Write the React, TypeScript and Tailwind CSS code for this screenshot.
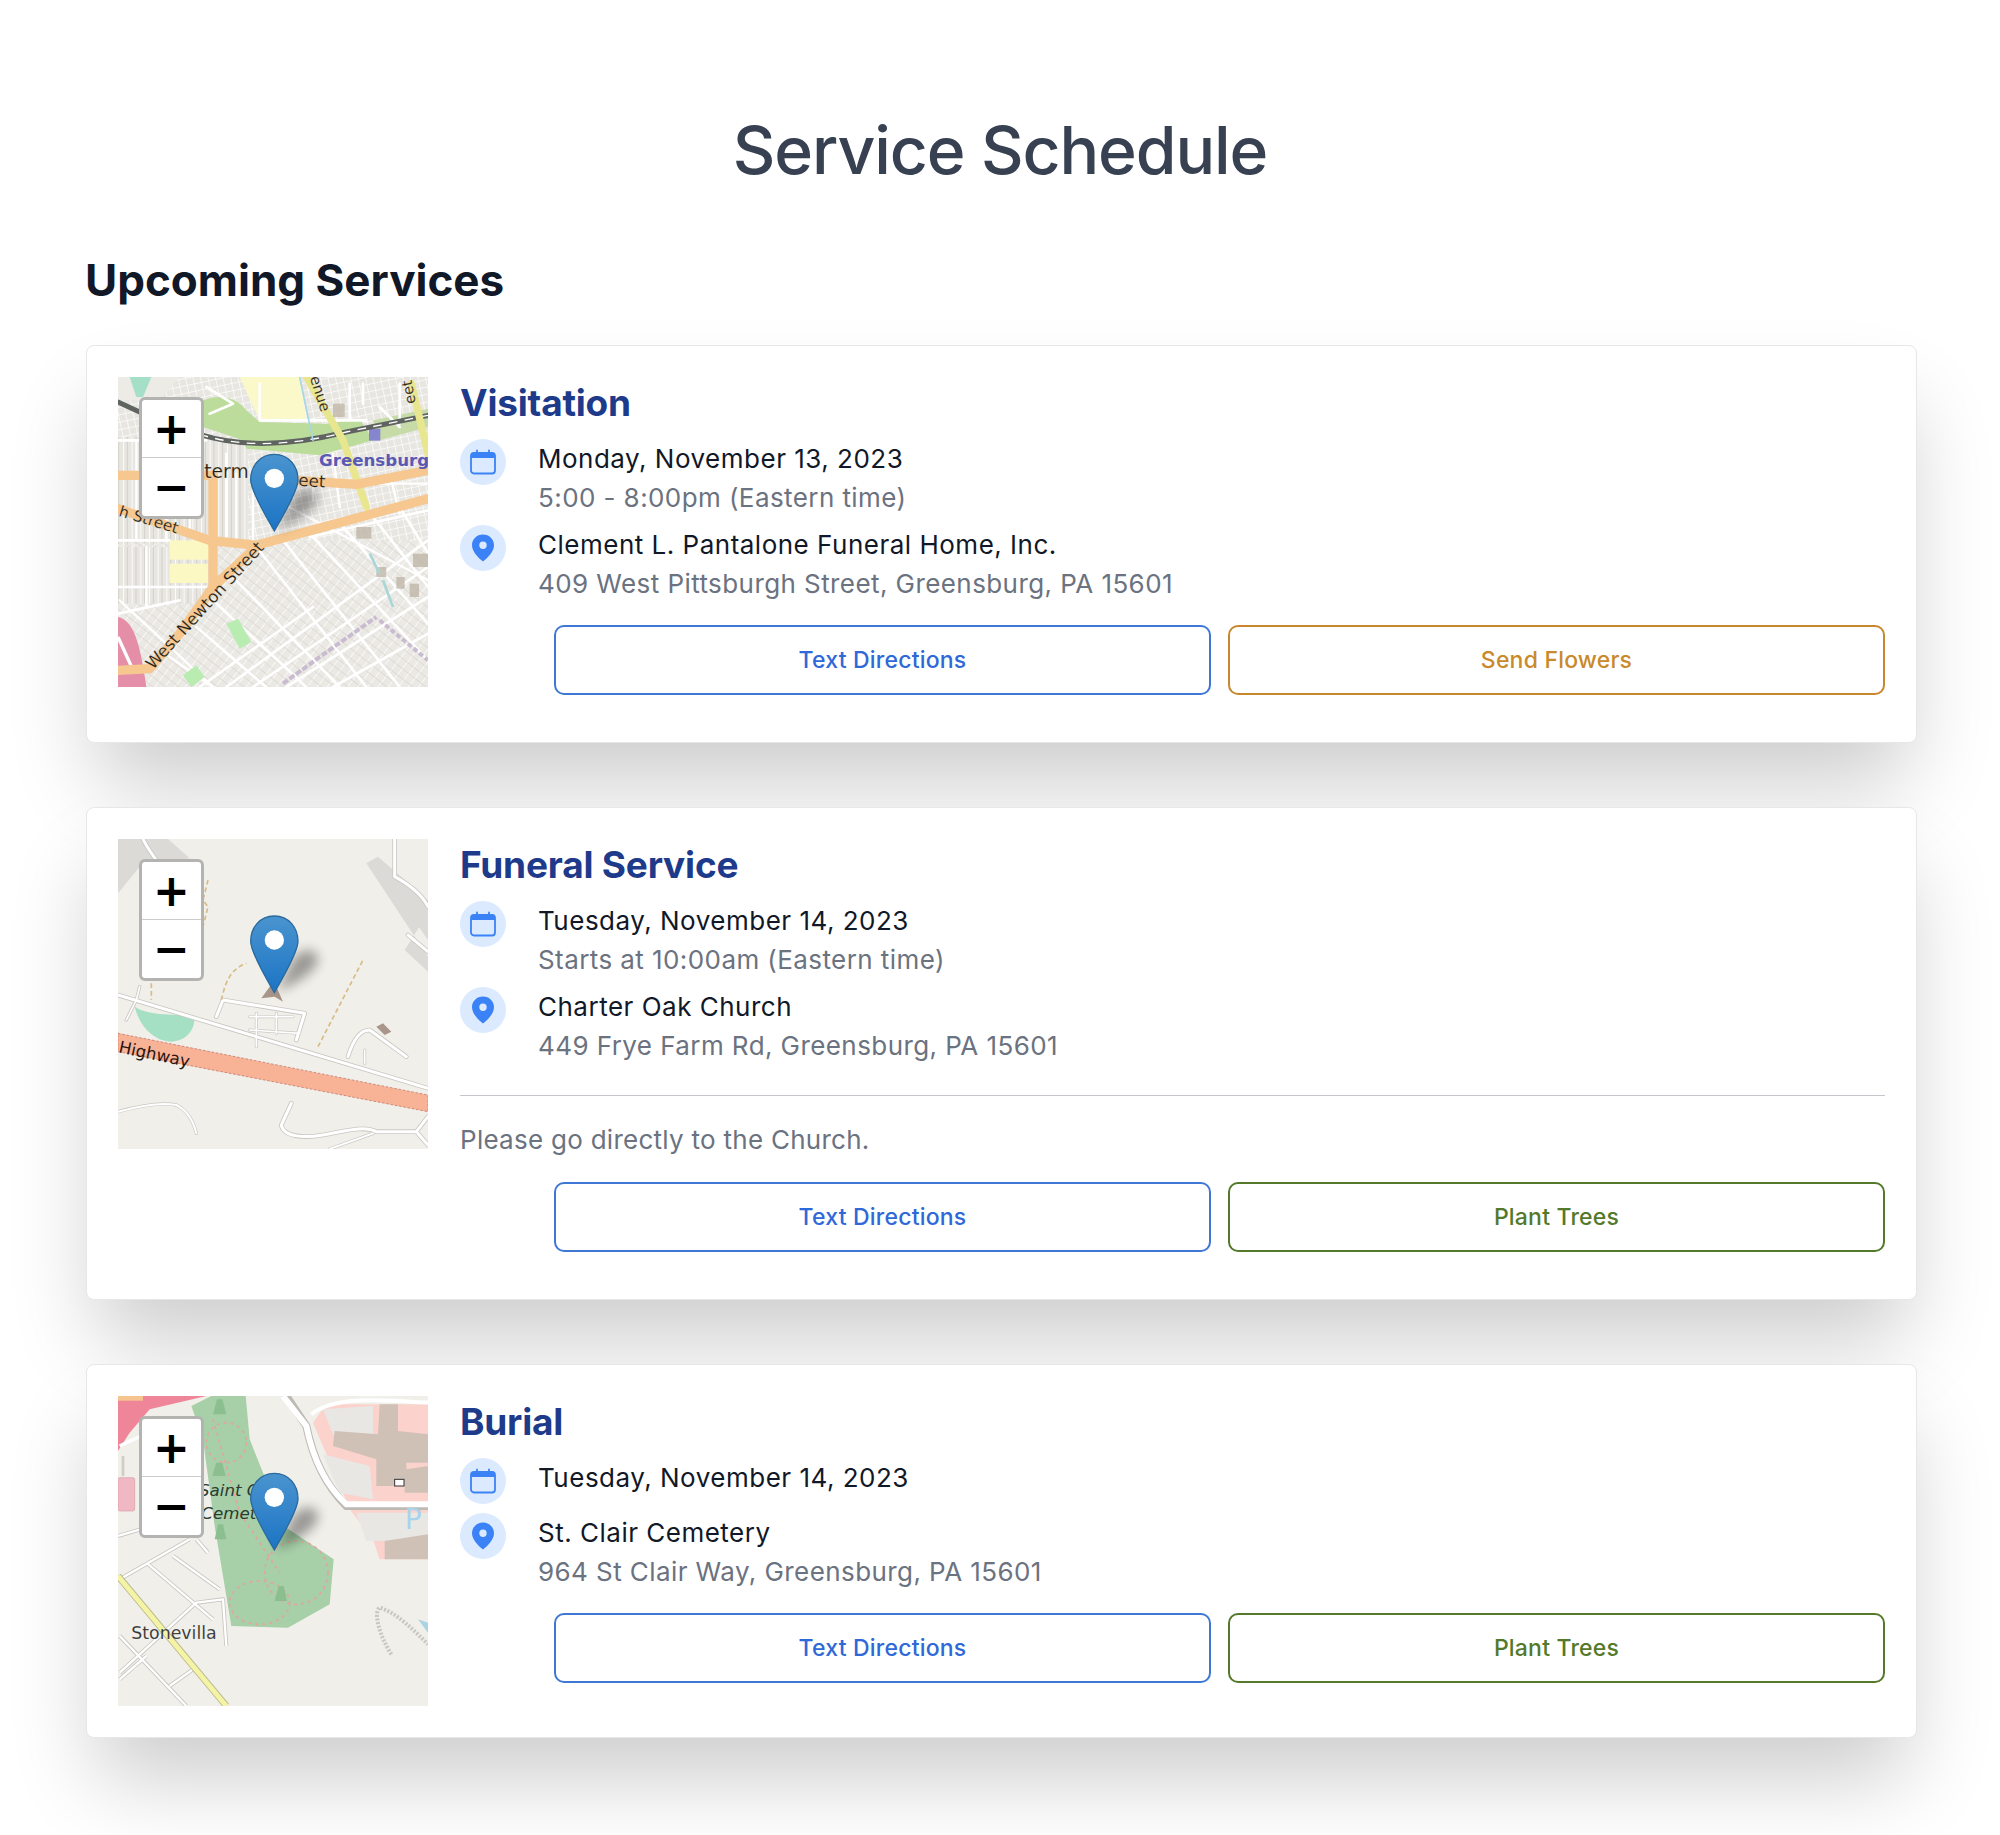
import React from "react";

type L = [string, string, number];

function Pin({ id, dy = 0 }: { id: string; dy?: number }) {
  return (
    <g transform={`translate(0 ${dy})`}>
      <defs>
        <linearGradient id={`${id}g`} x1="0" y1="0" x2="0" y2="1">
          <stop offset="0" stopColor="#4a94cf" />
          <stop offset="1" stopColor="#1c74c4" />
        </linearGradient>
        <filter id={`${id}b`} x="-80%" y="-80%" width="260%" height="260%">
          <feGaussianBlur stdDeviation="18" />
        </filter>
      </defs>
      <path d="M590 570 L640 470 C665 440 700 435 715 465 C720 500 660 540 590 570Z" fill="#000" opacity="0.36" filter={`url(#${id}b)`} />
      <path d="M584 342C540 342 513 378 513 418C513 452 560 530 584 572C608 530 655 452 655 418C655 378 628 342 584 342Z" fill={`url(#${id}g)`} stroke="#2a6a9e" strokeWidth="4" />
      <circle cx="584" cy="414" r="29" fill="#fff" />
    </g>
  );
}

function Lines({ items }: { items: L[] }) {
  return (
    <>
      {items.map(([d, c, w], i) => (
        <path key={i} d={d} stroke={c} strokeWidth={w} fill="none" strokeLinejoin="round" strokeLinecap="round" />
      ))}
    </>
  );
}

function Map1() {
  const white: L[] = [
    ["M115 300H380M115 600H270M115 740H400M115 820L300 780", "#fff", 8],
    ["M170 300V600M260 300V600M330 300V590M200 620V800M120 780L400 1040", "#fff", 7],
    ["M470 400V610M520 400V610M590 480L1045 720M700 430V480M440 340V610", "#fff", 7],
    ["M520 1040L1045 680M440 1040L1045 600M620 1040L1045 770M760 1040L1045 880M690 590L1045 510M360 1040L700 800", "#fff", 8],
    ["M530 620L860 1040M610 600L960 1040M700 590L1045 960M790 560L1045 850M880 530L1045 740M960 500L1045 640", "#fff", 8],
    ["M400 780L680 1040M350 860L560 1040M270 950L400 1040M450 700L780 1040", "#fff", 8],
    ["M540 240H860M540 240V130M900 200L960 260M810 130V240M380 140L460 190L390 220M960 130V250M850 130V190", "#fff", 8],
    ["M700 430H1045M760 340L780 500M930 400L960 520", "#fff", 7],
  ];
  return (
    <svg viewBox="115 110 930 930" className="block h-full w-full">
      <defs>
        <pattern id="m1a" width="24" height="24" patternUnits="userSpaceOnUse" patternTransform="rotate(38)">
          <rect width="24" height="24" fill="#ebe9e4" />
          <path d="M0 0V24" stroke="#fff" strokeWidth="4" />
          <path d="M0 12H24" stroke="#d9d6d0" strokeWidth="2" />
        </pattern>
        <pattern id="m1b" width="26" height="60" patternUnits="userSpaceOnUse">
          <rect width="26" height="60" fill="#e8e6e1" />
          <path d="M0 0V60" stroke="#fff" strokeWidth="5" />
          <path d="M13 0V60" stroke="#d3d0ca" strokeWidth="3" />
        </pattern>
        <pattern id="m1c" width="22" height="22" patternUnits="userSpaceOnUse" patternTransform="rotate(-12)">
          <rect width="22" height="22" fill="#e8e6e1" />
          <path d="M0 0H22M0 0V22" stroke="#fff" strokeWidth="4" />
        </pattern>
      </defs>
      <rect x="115" y="110" width="930" height="930" fill="url(#m1c)" />
      <rect x="115" y="600" width="930" height="440" fill="url(#m1a)" />
      <rect x="115" y="290" width="390" height="320" fill="url(#m1b)" />
      <rect x="115" y="620" width="290" height="170" fill="url(#m1b)" />
      <path d="M115 110H300L240 180H115Z" fill="#ecebe6" />
      <path d="M150 110H215L190 170H170Z" fill="#a5dfc8" />
      <path d="M480 110H660L680 240H540Z" fill="#fbf9c9" />
      <path d="M370 180C420 160 470 170 500 210L540 245L740 250L840 235L880 300L720 345L500 325L490 300L370 260Z" fill="#bcdc9c" />
      <path d="M880 240L1045 205V260L900 300Z" fill="#c6dba8" />
      <Lines items={white} />
      <rect x="868" y="265" width="34" height="36" fill="#8686cf" />
      <rect x="270" y="600" width="120" height="58" fill="#fbf8c3" />
      <rect x="270" y="670" width="115" height="58" fill="#fbf8c3" />
      <path d="M440 850L475 835L515 905L480 925Z" fill="#b8ecb0" />
      <path d="M310 1005L350 975L375 1010L335 1040Z" fill="#b8ecb0" />
      <path d="M115 830C160 840 180 900 200 1040H115Z" fill="#e58ea8" />
      <path d="M115 890L165 1000" stroke="#fff" strokeWidth="10" fill="none" />
      <Lines items={[
        ["M115 185L180 215L360 282C480 320 620 320 800 275L1045 225", "#5f6460", 15],
      ]} />
      <path d="M360 282C480 320 620 320 800 275L1045 225" stroke="#fff" strokeWidth="4" fill="none" strokeDasharray="26 22" />
      <Lines items={[
        ["M680 110L790 300L860 500", "#e9e690", 22],
        ["M995 130L1045 340", "#e9e690", 22],
        ["M115 405H400M650 420L830 432L1045 390", "#f6c78f", 28],
        ["M115 505L390 600L530 615L1045 475", "#f6c78f", 28],
        ["M400 405V740", "#f6c78f", 28],
        ["M115 990L210 985L300 880L400 740L530 620", "#f6c78f", 28],
        ["M660 110L700 300", "#a8d6e4", 5],
      ]} />
      <path d="M610 1030L720 950L890 830" stroke="#c9bcd0" strokeWidth="12" fill="none" strokeDasharray="18 6" />
      <path d="M900 840L1045 960" stroke="#c9bcd0" strokeWidth="12" fill="none" strokeDasharray="14 8" />
      <g fill="#bfb6a8" opacity="0.8">
        <rect x="830" y="560" width="45" height="35" />
        <rect x="1000" y="640" width="45" height="40" />
        <rect x="760" y="190" width="35" height="40" />
        <rect x="890" y="680" width="30" height="30" />
        <rect x="950" y="710" width="25" height="35" />
        <rect x="990" y="730" width="28" height="40" />
      </g>
      <path d="M870 640L900 700M910 720L940 800" stroke="#a9d6d8" strokeWidth="8" />
      <g fontFamily="'DejaVu Sans', sans-serif" fill="#1f1a12" fontSize="50" stroke="#f6e6cc" strokeOpacity="0.5" strokeWidth="1">
        <text x="352" y="412" fontSize="56">tterm</text>
        <text x="655" y="436" transform="rotate(4 655 436)">eet</text>
        <text x="115" y="526" transform="rotate(17 115 526)" fontSize="46">h Street</text>
        <text x="220" y="990" transform="rotate(-47.5 220 990)" fontSize="50">West Newton Street</text>
        <text x="690" y="112" transform="rotate(72 690 112)" fontSize="44">enue</text>
        <text x="1008" y="188" transform="rotate(-100 1008 188)" fontSize="44">eet</text>
      </g>
      <text x="718" y="378" fontFamily="'DejaVu Sans', sans-serif" fontWeight="700" fontSize="50" fill="#5a5ab5">Greensburg</text>
      <Pin id="p1" />
    </svg>
  );
}

function Map2() {
  return (
    <svg viewBox="115 117 930 930" className="block h-full w-full">
      <rect x="115" y="117" width="930" height="930" fill="#f1efe9" />
      <path d="M115 117H265L330 175L240 190L180 200L115 280Z" fill="#dcdad6" />
      <path d="M860 190L895 170L1045 300V420L1010 370L1045 340L975 450L1045 515V470Z" fill="#dcdad6" />
      <path d="M165 620C210 650 290 640 345 650C345 700 310 725 270 725C220 720 180 680 165 620Z" fill="#a5dfc4" />
      <g fill="none" stroke="#c9c7c3" strokeLinejoin="round" strokeLinecap="round">
        <path d="M115 585L1045 865" strokeWidth="14" />
        <path d="M190 117C205 150 225 170 235 190" strokeWidth="14" />
        <path d="M945 117V230C1000 260 1030 290 1045 320" strokeWidth="14" />
        <path d="M985 405L1045 455" strokeWidth="14" />
        <path d="M410 650L430 600L675 640L650 720" strokeWidth="14" />
        <path d="M510 650H640M590 640V700M530 640L530 740M510 690L660 700" strokeWidth="9" />
        <path d="M805 770C820 720 840 690 870 690L980 770" strokeWidth="14" />
        <path d="M855 750V790" strokeWidth="9" />
        <path d="M115 935C170 920 240 905 290 915C320 930 340 960 350 1000" strokeWidth="10" />
        <path d="M635 910L605 975C610 1010 670 1015 730 1005C790 995 850 975 890 995H1010L1045 950M1010 995L1045 1035" strokeWidth="14" />
        <path d="M750 1047L880 1000" strokeWidth="10" />
        <path d="M180 560L170 600L140 660" strokeWidth="10" />
      </g>
      <g fill="none" stroke="#fff" strokeLinejoin="round" strokeLinecap="round">
        <path d="M115 585L1045 865" strokeWidth="9" />
        <path d="M190 117C205 150 225 170 235 190" strokeWidth="9" />
        <path d="M945 117V230C1000 260 1030 290 1045 320" strokeWidth="9" />
        <path d="M985 405L1045 455" strokeWidth="9" />
        <path d="M410 650L430 600L675 640L650 720" strokeWidth="9" />
        <path d="M510 650H640M590 640V700M530 640L530 740M510 690L660 700" strokeWidth="5" />
        <path d="M805 770C820 720 840 690 870 690L980 770" strokeWidth="9" />
        <path d="M855 750V790" strokeWidth="5" />
        <path d="M115 935C170 920 240 905 290 915C320 930 340 960 350 1000" strokeWidth="6" />
        <path d="M635 910L605 975C610 1010 670 1015 730 1005C790 995 850 975 890 995H1010L1045 950M1010 995L1045 1035" strokeWidth="9" />
        <path d="M750 1047L880 1000" strokeWidth="6" />
        <path d="M180 560L170 600L140 660" strokeWidth="5" />
      </g>
      <g fill="none" stroke="#d7bc85" strokeWidth="5" strokeDasharray="14 9">
        <path d="M385 240L370 300L385 320L370 380" />
        <path d="M425 600C435 560 445 510 500 490" />
        <path d="M215 550V600" />
        <path d="M715 740L850 480" />
      </g>
      <path d="M115 700L1045 885V935L115 755Z" fill="#f8b397" stroke="#b96a5a" strokeWidth="2" strokeDasharray="8 5" />
      <path d="M545 595L570 560L590 560L610 605L585 590Z" fill="#a8968a" />
      <path d="M890 680L910 670L935 695L915 705Z" fill="#a8968a" />
      <text x="115" y="757" transform="rotate(12 115 757)" fontFamily="'DejaVu Sans', sans-serif" fontSize="50" fill="#2a1610">Highway</text>
      <Pin id="p2" dy={6} />
    </svg>
  );
}

function Map3() {
  return (
    <svg viewBox="115 110 930 930" className="block h-full w-full">
      <rect x="115" y="110" width="930" height="930" fill="#f0efe9" />
      <path d="M115 110H380L210 150L150 220L115 275Z" fill="#ee8598" />
      <rect x="115" y="110" width="75" height="14" fill="#f6c58f" />
      <path d="M335 140L395 110H498L510 240L550 340L620 505L762 600L750 735L625 805L455 800L405 500L370 240Z" fill="#a7cfa8" />
      <g fill="none" stroke="#e5a3a0" strokeWidth="5" strokeDasharray="9 12">
        <circle cx="440" cy="250" r="60" />
        <ellipse cx="540" cy="730" rx="90" ry="65" />
        <circle cx="650" cy="640" r="95" />
        <path d="M400 180L480 460L600 640" />
      </g>
      <g fill="#8cbf8f">
        <path d="M400 165L412 120H428L440 165Z" />
        <path d="M398 350L410 310H428L438 350Z" />
        <path d="M405 540L415 495H430L440 540Z" />
        <path d="M585 725L597 680H612L622 725Z" />
      </g>
      <path d="M700 190L740 135H1045V600H900L880 540L810 450Z" fill="#fcd2cd" />
      <path d="M730 285L870 320L880 420L780 400Z" fill="#e8e7e4" />
      <path d="M830 460L1045 460V530L910 545H860Z" fill="#e8e7e4" />
      <path d="M730 150L880 140V230L760 225Z" fill="#e8e7e4" />
      <path d="M900 135H955V215L1045 225V310H980V330L1045 320V400H975V380H890V300L760 260L765 215L895 225Z" fill="#cfc1b6" />
      <path d="M915 545L1045 525V600H915Z" fill="#cfc1b6" />
      <path d="M620 110L680 200C700 300 740 380 800 440H1045" fill="none" stroke="#bdbab4" strokeWidth="24" strokeLinecap="round" />
      <path d="M610 110L680 200C700 300 740 380 800 435H1045" fill="none" stroke="#fff" strokeWidth="18" />
      <path d="M1045 130C900 120 760 110 695 165" fill="none" stroke="#fff" strokeWidth="12" />
      <rect x="945" y="360" width="28" height="20" fill="#fff" stroke="#333" strokeWidth="3" />
      <rect x="115" y="355" width="50" height="100" rx="6" fill="#efb8c2" stroke="#d99aa6" strokeWidth="2" />
      <path d="M120 260C200 220 260 205 335 190" fill="none" stroke="#fff" strokeWidth="10" />
      <path d="M130 290V350" stroke="#d0cdc6" strokeWidth="8" />
      <g fill="none" stroke="#c8c6c0" strokeWidth="12" strokeLinejoin="round">
        <path d="M120 660L330 540M115 530L200 505M120 940L350 730L430 720L440 860M200 610L400 780M280 590L420 690M350 540L385 580M120 830L320 1040M200 890L120 960M270 980L340 930" />
        <path d="M935 885C900 830 880 760 900 745C950 760 1000 810 1045 855" strokeDasharray="6 5" />
      </g>
      <g fill="none" stroke="#fff" strokeWidth="7" strokeLinejoin="round">
        <path d="M120 660L330 540M115 530L200 505M120 940L350 730L430 720L440 860M200 610L400 780M280 590L420 690M350 540L385 580M120 830L320 1040M200 890L120 960M270 980L340 930" />
      </g>
      <path d="M115 650L440 1040" stroke="#b7b98a" strokeWidth="20" />
      <path d="M115 650L440 1040" stroke="#f5f3a6" strokeWidth="15" />
      <path d="M1015 780L1045 790V820Z" fill="#a8d4e4" />
      <text x="975" y="510" fontFamily="'DejaVu Sans', sans-serif" fontSize="84" fill="#a9d3ec">P</text>
      <text x="358" y="410" fontFamily="'DejaVu Sans', sans-serif" fontStyle="italic" fontSize="50" fill="#2c3a30">Saint C</text>
      <text x="365" y="478" fontFamily="'DejaVu Sans', sans-serif" fontStyle="italic" fontSize="50" fill="#2c3a30">Cemet</text>
      <text x="155" y="840" fontFamily="'DejaVu Sans', sans-serif" fontSize="52" fill="#333" stroke="#fff" strokeOpacity="0.3" strokeWidth="1">Stonevilla</text>
      <Pin id="p3" />
    </svg>
  );
}

function MapBox({ children }: { children: React.ReactNode }) {
  return (
    <div className="relative h-[310px] w-[310px] shrink-0 overflow-hidden">
      {children}
      <div className="absolute left-[21px] top-[20px] flex w-[65px] flex-col rounded-[6px] border-[3px] border-[#b3b3b1] bg-white font-['DejaVu_Sans',sans-serif] text-[44px] font-bold leading-none text-black">
        <div className="flex h-[58px] items-center justify-center border-b border-[#cccccc]">+</div>
        <div className="flex h-[58px] items-center justify-center">−</div>
      </div>
    </div>
  );
}

function CalIcon() {
  return (
    <svg viewBox="0 0 26 26" className="h-[26px] w-[26px]" fill="none">
      <path d="M7 1.5V6M19 1.5V6" stroke="#3b82f6" strokeWidth="1.8" strokeLinecap="round" />
      <path d="M1 9V6.5A2.5 2.5 0 0 1 3.500 4h19A2.500 2.500 0 0 1 25 6.500V9Z" fill="#3b82f6" />
      <rect x="1" y="4" width="24" height="20.500" rx="3" stroke="#3b82f6" strokeWidth="1.800" />
    </svg>
  );
}

function PinIcon() {
  return (
    <svg viewBox="0 0 24 28" className="h-[28px] w-[24px]">
      <path fillRule="evenodd" d="M12 .5C5.700.5 1 5.300 1 11.200c0 6.500 6.500 12.700 11 16.300 4.500-3.600 11-9.800 11-16.300C23 5.300 18.300.5 12 .5Zm0 14.500a3.700 3.700 0 1 1 0-7.400 3.700 3.700 0 0 1 0 7.400Z" fill="#3b82f6" />
    </svg>
  );
}

function Row({ icon, main, sub }: { icon: React.ReactNode; main: string; sub?: string }) {
  return (
    <div className="flex min-h-[47px] items-start gap-8">
      <div className="flex h-[46px] w-[46px] shrink-0 items-center justify-center rounded-full bg-[#dbeafe]">{icon}</div>
      <div className="text-[26px] leading-[39px]">
        <div className="tracking-[0.5px] text-[#111827]">{main}</div>
        {sub && <div className="tracking-[0.42px] text-[#6b7280]">{sub}</div>}
      </div>
    </div>
  );
}

function Btn({ children, cls }: { children: string; cls: string }) {
  return (
    <button className={`flex h-[70px] w-[657px] items-center justify-center rounded-[10px] border-2 bg-white text-[23px] font-medium tracking-[0.2px] ${cls}`}>
      {children}
    </button>
  );
}

function Card({ map, title, rows, note, action }: {
  map: React.ReactNode;
  title: string;
  rows: { icon: React.ReactNode; main: string; sub?: string }[];
  note?: string;
  action: React.ReactNode;
}) {
  return (
    <div className="flex items-start gap-8 rounded-lg border border-[#e5e7eb] bg-white p-[31px] shadow-[0_50px_80px_-10px_rgba(0,0,0,0.2)]">
      <MapBox>{map}</MapBox>
      <div className="min-w-0 flex-1 pb-4">
        <h3 className="mb-[10px] text-[37px] font-bold leading-[52px] tracking-[-0.2px] text-[#1e3a8a]">{title}</h3>
        <div className="flex flex-col gap-2">
          {rows.map((r) => <Row key={r.main} {...r} />)}
        </div>
        {note && (
          <div className="mt-[30px] border-t border-[#c4c7cc] pb-px pt-[24px] text-[26px] leading-[39px] tracking-[0.27px] text-[#6b7280]">{note}</div>
        )}
        <div className="mt-[22px] flex justify-end gap-[17px]">
          <Btn cls="border-[#3f78d4] text-[#2f68d8]">Text Directions</Btn>
          {action}
        </div>
      </div>
    </div>
  );
}

export default function App() {
  const cal = <CalIcon />;
  const pin = <PinIcon />;
  const trees = <Btn cls="border-[#54792a] text-[#54792a]">Plant Trees</Btn>;
  return (
    <div className="min-h-[1835px] overflow-hidden bg-white font-['Inter',sans-serif]">
      <h1 className="pt-[110px] text-center text-[66px] font-medium leading-[80px] tracking-[-1.1px] text-[#374151]">Service Schedule</h1>
      <div className="pl-[86px] pr-[83px]">
        <h2 className="-ml-[1px] mt-[60px] text-[44px] font-bold leading-[60px] text-[#111827]">Upcoming Services</h2>
        <div className="mt-[35px] flex flex-col gap-16">
          <Card
            map={<Map1 />}
            title="Visitation"
            rows={[
              { icon: cal, main: "Monday, November 13, 2023", sub: "5:00 - 8:00pm (Eastern time)" },
              { icon: pin, main: "Clement L. Pantalone Funeral Home, Inc.", sub: "409 West Pittsburgh Street, Greensburg, PA 15601" },
            ]}
            action={<Btn cls="border-[#c8872c] text-[#c98a2b]">Send Flowers</Btn>}
          />
          <Card
            map={<Map2 />}
            title="Funeral Service"
            rows={[
              { icon: cal, main: "Tuesday, November 14, 2023", sub: "Starts at 10:00am (Eastern time)" },
              { icon: pin, main: "Charter Oak Church", sub: "449 Frye Farm Rd, Greensburg, PA 15601" },
            ]}
            note="Please go directly to the Church."
            action={trees}
          />
          <Card
            map={<Map3 />}
            title="Burial"
            rows={[
              { icon: cal, main: "Tuesday, November 14, 2023" },
              { icon: pin, main: "St. Clair Cemetery", sub: "964 St Clair Way, Greensburg, PA 15601" },
            ]}
            action={trees}
          />
        </div>
      </div>
    </div>
  );
}
